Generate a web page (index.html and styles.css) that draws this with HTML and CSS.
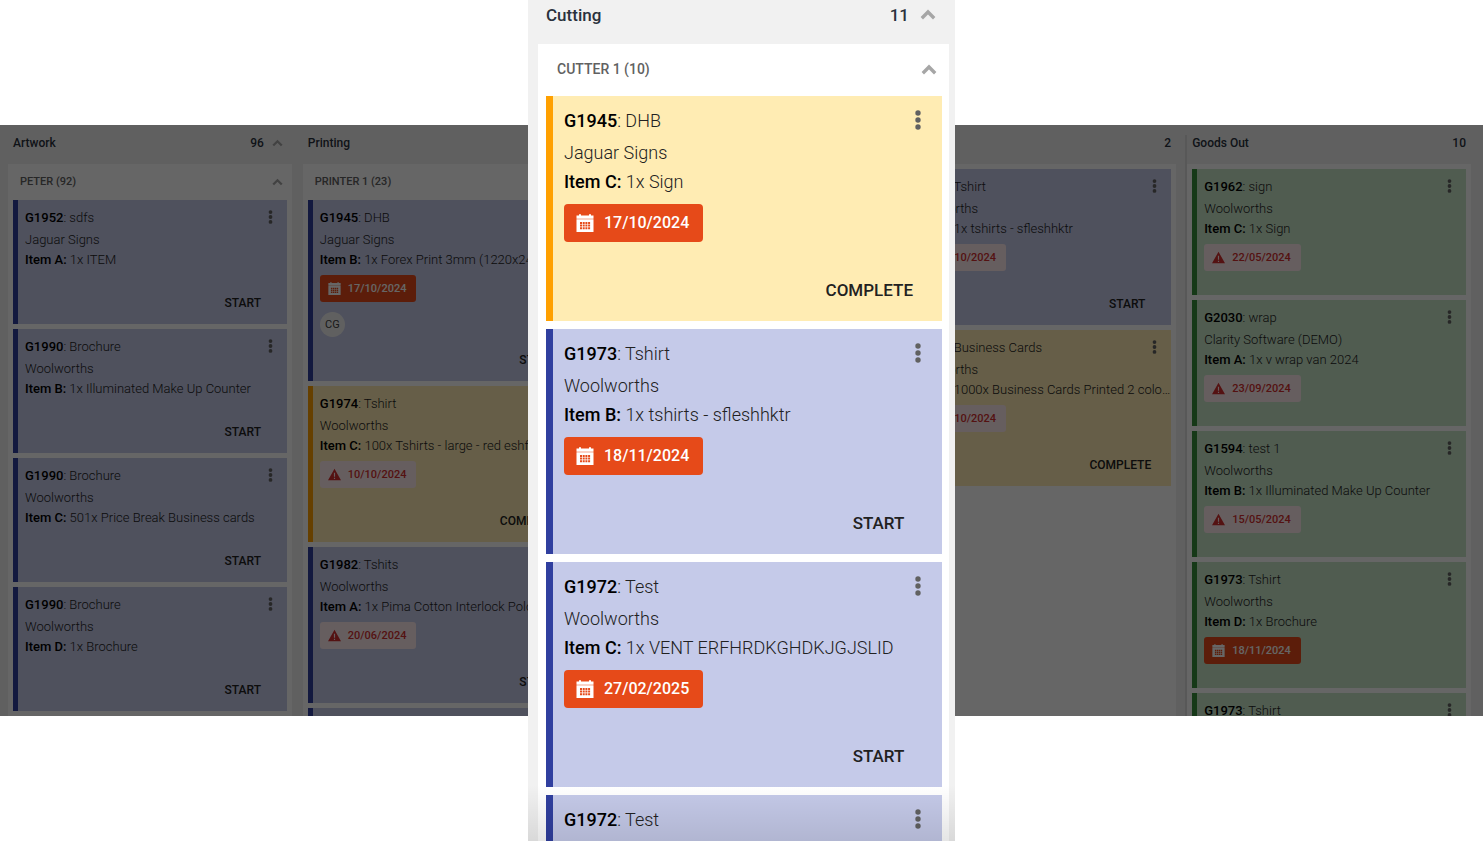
FILE: index.html
```html
<!DOCTYPE html>
<html lang="en">
<head>
<meta charset="utf-8">
<title>Production board</title>
<link rel="stylesheet" href="styles.css">
</head>
<body>
<svg class="sprite" aria-hidden="true">
  <symbol id="up" viewBox="0 0 16 11"><path d="M1.8 9.2 8 3l6.200 6.200" fill="none" stroke="currentColor" stroke-width="3.400"/></symbol>
  <symbol id="dots" viewBox="0 0 6 20"><circle cx="3" cy="3" r="2.700"/><circle cx="3" cy="10" r="2.700"/><circle cx="3" cy="17" r="2.700"/></symbol>
  <symbol id="cal" viewBox="0 0 18 18"><path fill-rule="evenodd" d="M.5 1.500H3V.3h2v1.200h8V.3h2v1.200h2.500v3.200H.5zM.5 5.300h17V18H.5zM4 8v2h2V8zm2.700 0v2h2V8zm2.700 0v2h2V8zm2.700 0v2h2V8zM4 10.600v2h2v-2zm2.700 0v2h2v-2zm2.700 0v2h2v-2zm2.700 0v2h2v-2zM4 13.200v2h2v-2zm2.700 0v2h2v-2zm2.700 0v2h2v-2zm2.700 0v2h2v-2z"/></symbol>
  <symbol id="warn" viewBox="0 0 18 18"><path fill-rule="evenodd" d="M9 1 18 17H0zM8.200 6.500v5.500h1.600V6.500zm0 7v1.600h1.600v-1.600z"/></symbol>
</svg>
<main class="stage">
  <div class="board">
    <section class="column">
      <header class="column-head"><h2>Artwork</h2><span>96</span><button class="toggle" aria-label="Collapse Artwork"><svg><use href="#up"/></svg></button></header>
      <div class="lane">
        <div class="group-head"><h3>PETER (92)</h3><button class="toggle" aria-label="Collapse Peter"><svg><use href="#up"/></svg></button></div>
        <article class="card todo"><button class="menu" aria-label="Menu"><svg><use href="#dots"/></svg></button><p class="job"><b>G1952</b>: sdfs</p><p class="client">Jaguar Signs</p><p class="item"><b>Item A:</b> 1x ITEM</p><div class="actions"><button>START</button></div></article>
        <article class="card todo"><button class="menu" aria-label="Menu"><svg><use href="#dots"/></svg></button><p class="job"><b>G1990</b>: Brochure</p><p class="client">Woolworths</p><p class="item"><b>Item B:</b> 1x Illuminated Make Up Counter</p><div class="actions"><button>START</button></div></article>
        <article class="card todo"><button class="menu" aria-label="Menu"><svg><use href="#dots"/></svg></button><p class="job"><b>G1990</b>: Brochure</p><p class="client">Woolworths</p><p class="item"><b>Item C:</b> 501x Price Break Business cards</p><div class="actions"><button>START</button></div></article>
        <article class="card todo"><button class="menu" aria-label="Menu"><svg><use href="#dots"/></svg></button><p class="job"><b>G1990</b>: Brochure</p><p class="client">Woolworths</p><p class="item"><b>Item D:</b> 1x Brochure</p><div class="actions"><button>START</button></div></article>
      </div>
    </section>
    <section class="column">
      <header class="column-head"><h2>Printing</h2></header>
      <div class="lane">
        <div class="group-head"><h3>PRINTER 1 (23)</h3></div>
        <article class="card todo"><p class="job"><b>G1945</b>: DHB</p><p class="client">Jaguar Signs</p><p class="item"><b>Item B:</b> 1x Forex Print 3mm (1220x2440)</p><span class="chip"><svg><use href="#cal"/></svg>17/10/2024</span><span class="avatar">CG</span><div class="actions"><button>START</button></div></article>
        <article class="card active"><p class="job"><b>G1974</b>: Tshirt</p><p class="client">Woolworths</p><p class="item"><b>Item C:</b> 100x Tshirts - large - red eshfs</p><span class="chip late"><svg><use href="#warn"/></svg>10/10/2024</span><div class="actions"><button>COMPLETE</button></div></article>
        <article class="card todo"><p class="job"><b>G1982</b>: Tshits</p><p class="client">Woolworths</p><p class="item"><b>Item A:</b> 1x Pima Cotton Interlock Polo</p><span class="chip late"><svg><use href="#warn"/></svg>20/06/2024</span><div class="actions"><button>START</button></div></article>
        <article class="card todo"></article>
      </div>
    </section>
    <section class="column"></section>
    <section class="column">
      <header class="column-head"><h2></h2><span>2</span></header>
      <div class="lane plain">
        <article class="card todo"><button class="menu" aria-label="Menu"><svg><use href="#dots"/></svg></button><p class="job"><b>G1973</b>: Tshirt</p><p class="client">Woolworths</p><p class="item"><b>Item B:</b> 1x tshirts - sfleshhktr</p><span class="chip late"><svg><use href="#warn"/></svg>10/10/2024</span><div class="actions"><button>START</button></div></article>
        <article class="card active"><button class="menu" aria-label="Menu"><svg><use href="#dots"/></svg></button><p class="job"><b>G1990</b>: Business Cards</p><p class="client">Woolworths</p><p class="item"><b>Item B:</b> 1000x Business Cards Printed 2 colo…</p><span class="chip late"><svg><use href="#warn"/></svg>10/10/2024</span><div class="actions"><button>COMPLETE</button></div></article>
      </div>
    </section>
    <section class="column ruled">
      <header class="column-head"><h2>Goods Out</h2><span>10</span></header>
      <div class="lane plain">
        <article class="card done"><button class="menu" aria-label="Menu"><svg><use href="#dots"/></svg></button><p class="job"><b>G1962</b>: sign</p><p class="client">Woolworths</p><p class="item"><b>Item C:</b> 1x Sign</p><span class="chip late"><svg><use href="#warn"/></svg>22/05/2024</span></article>
        <article class="card done"><button class="menu" aria-label="Menu"><svg><use href="#dots"/></svg></button><p class="job"><b>G2030</b>: wrap</p><p class="client">Clarity Software (DEMO)</p><p class="item"><b>Item A:</b> 1x v wrap van 2024</p><span class="chip late"><svg><use href="#warn"/></svg>23/09/2024</span></article>
        <article class="card done"><button class="menu" aria-label="Menu"><svg><use href="#dots"/></svg></button><p class="job"><b>G1594</b>: test 1</p><p class="client">Woolworths</p><p class="item"><b>Item B:</b> 1x Illuminated Make Up Counter</p><span class="chip late"><svg><use href="#warn"/></svg>15/05/2024</span></article>
        <article class="card done"><button class="menu" aria-label="Menu"><svg><use href="#dots"/></svg></button><p class="job"><b>G1973</b>: Tshirt</p><p class="client">Woolworths</p><p class="item"><b>Item D:</b> 1x Brochure</p><span class="chip"><svg><use href="#cal"/></svg>18/11/2024</span></article>
        <article class="card done"><button class="menu" aria-label="Menu"><svg><use href="#dots"/></svg></button><p class="job"><b>G1973</b>: Tshirt</p></article>
      </div>
    </section>
  </div>
  <section class="column focus">
    <header class="column-head"><h2>Cutting</h2><span>11</span><button class="toggle" aria-label="Collapse Cutting"><svg><use href="#up"/></svg></button></header>
    <div class="lane">
      <div class="group-head"><h3>CUTTER 1 (10)</h3><button class="toggle" aria-label="Collapse Cutter 1"><svg><use href="#up"/></svg></button></div>
      <article class="card active"><button class="menu" aria-label="Menu"><svg><use href="#dots"/></svg></button><p class="job"><b>G1945</b>: DHB</p><p class="client">Jaguar Signs</p><p class="item"><b>Item C:</b> 1x Sign</p><span class="chip"><svg><use href="#cal"/></svg>17/10/2024</span><div class="actions"><button>COMPLETE</button></div></article>
      <article class="card todo"><button class="menu" aria-label="Menu"><svg><use href="#dots"/></svg></button><p class="job"><b>G1973</b>: Tshirt</p><p class="client">Woolworths</p><p class="item"><b>Item B:</b> 1x tshirts - sfleshhktr</p><span class="chip"><svg><use href="#cal"/></svg>18/11/2024</span><div class="actions"><button>START</button></div></article>
      <article class="card todo"><button class="menu" aria-label="Menu"><svg><use href="#dots"/></svg></button><p class="job"><b>G1972</b>: Test</p><p class="client">Woolworths</p><p class="item"><b>Item C:</b> 1x VENT ERFHRDKGHDKJGJSLID</p><span class="chip"><svg><use href="#cal"/></svg>27/02/2025</span><div class="actions"><button>START</button></div></article>
      <article class="card todo"><button class="menu" aria-label="Menu"><svg><use href="#dots"/></svg></button><p class="job"><b>G1972</b>: Test</p></article>
    </div>
  </section>
</main>
</body>
</html>
```
FILE: styles.css
```css
* { box-sizing: border-box; }
body { margin: 0; background: #fff; font-family: Roboto, "Liberation Sans", sans-serif; color: #212121; }
h2, h3, p { margin: 0; }
button { font: inherit; color: inherit; background: none; border: 0; padding: 0; cursor: pointer; }
svg { display: block; fill: currentColor; }
.sprite { position: absolute; width: 0; height: 0; }

.stage { display: grid; grid-template: 100vh / 100%; align-items: center; padding-right: 1px; overflow: hidden; }
.stage > * { grid-area: 1 / 1; }

/* Dimmed board behind the highlighted column */
.board {
  position: relative;
  display: grid;
  grid-template-columns: repeat(5, minmax(0, 1fr));
  gap: 11px;
  height: 591px;
  padding: 0 12px 0 8px;
  overflow: hidden;
  background: #f1f1f1;
}
.board::after { content: ""; position: absolute; inset: 0; background: rgba(0, 0, 0, .6); }

.column { font-size: 13px; }
.ruled { position: relative; }
.ruled::before { content: ""; position: absolute; left: -2px; top: 10px; bottom: 0; width: 2px; background: #dcdcdc; }
.column-head { display: flex; align-items: center; height: 39px; padding: 0 5px 3px; color: #2a313d; font-size: 12px; font-weight: 500; }
.column-head h2 { flex: 1; font: inherit; }
.toggle { margin: 0 4px 0 8px; color: #a6a6a6; }
.toggle svg { width: 11px; height: 8px; }
.lane { display: flex; flex-direction: column; gap: 5px; min-height: 100%; padding: 0 5px; background: #fff; }
.lane.plain { padding-top: 5px; }
.group-head { display: flex; align-items: center; justify-content: space-between; height: 31px; padding: 4px 0 0 7px; color: #616161; }
.group-head h3 { font-size: 11px; font-weight: 500; }

.card { position: relative; flex: none; min-height: 60px; padding: 7px 12px 11px 7px; border-left: 5px solid; line-height: 22px; font-weight: 300; }
.card b { color: #000; font-weight: 500; }
.todo { background: #c5cae9; border-color: #303f9f; }
.active { background: #ffecb3; border-color: #ffa000; }
.done { background: #c8e6c9; border-color: #388e3c; padding-bottom: 24px; }
.item { height: 18px; margin-right: -12px; line-height: 18px; white-space: nowrap; }
.menu { position: absolute; top: 10px; right: 14px; color: #616161; }
.menu svg { width: 5px; height: 14px; }
.chip { display: flex; align-items: center; gap: 7px; width: max-content; height: 27px; margin-top: 6px; padding: 0 10px 0 8px; border-radius: 3px; background: #e64a19; color: #fff; font-size: 11px; font-weight: 500; }
.chip svg { width: 13px; height: 13px; }
.late { background: #ffebee; color: #d32f2f; }
.avatar { display: block; width: 25px; height: 25px; margin: 10px 0 -11px; border-radius: 50%; background: #f1f1f1; color: #424242; font-size: 11px; line-height: 25px; text-align: center; font-weight: 400; }
.actions { display: flex; justify-content: flex-end; margin-top: 24px; }
.chip + .actions { margin-top: 23px; }
.actions button { min-width: 64px; padding: 0 8px; line-height: 20px; font-size: 12px; font-weight: 500; }

.focus { position: relative; justify-self: center; align-self: start; width: 427px; max-width: 100%; height: 100vh; padding: 0 6px 0 10px; background: #f1f1f1; font-size: 18px; overflow: hidden; }
.focus::after { content: ""; position: absolute; inset: auto 0 0; height: 56px; background: linear-gradient(rgba(0, 0, 0, 0), rgba(0, 0, 0, .1)); pointer-events: none; }
.focus .column-head { height: 44px; padding: 0 8px 15px; font-size: 17px; }
.focus .toggle { margin: 0 5px 0 11px; }
.focus .toggle svg { width: 16px; height: 11px; }
.focus .lane { gap: 8px; padding: 0 7px 0 8px; }
.focus .group-head { height: 44px; padding: 6px 0 0 11px; }
.focus .group-head h3 { font-size: 14px; }
.focus .card { min-height: 100px; padding: 9px 17px 19px 11px; border-left-width: 7px; line-height: 32px; }
.focus .client { line-height: 31px; }
.focus .item { height: 28px; line-height: 28px; }
.focus .menu { top: 14px; right: 21px; }
.focus .menu svg { width: 6px; height: 20px; }
.focus .chip { gap: 10px; height: 38px; margin-top: 8px; padding: 0 14px 0 12px; border-radius: 4px; font-size: 16px; }
.focus .chip svg { width: 18px; height: 18px; }
.focus .actions { margin-top: 36px; }
.focus .actions button { min-width: 93px; padding: 0 12px; line-height: 24px; font-size: 17px; }
```
